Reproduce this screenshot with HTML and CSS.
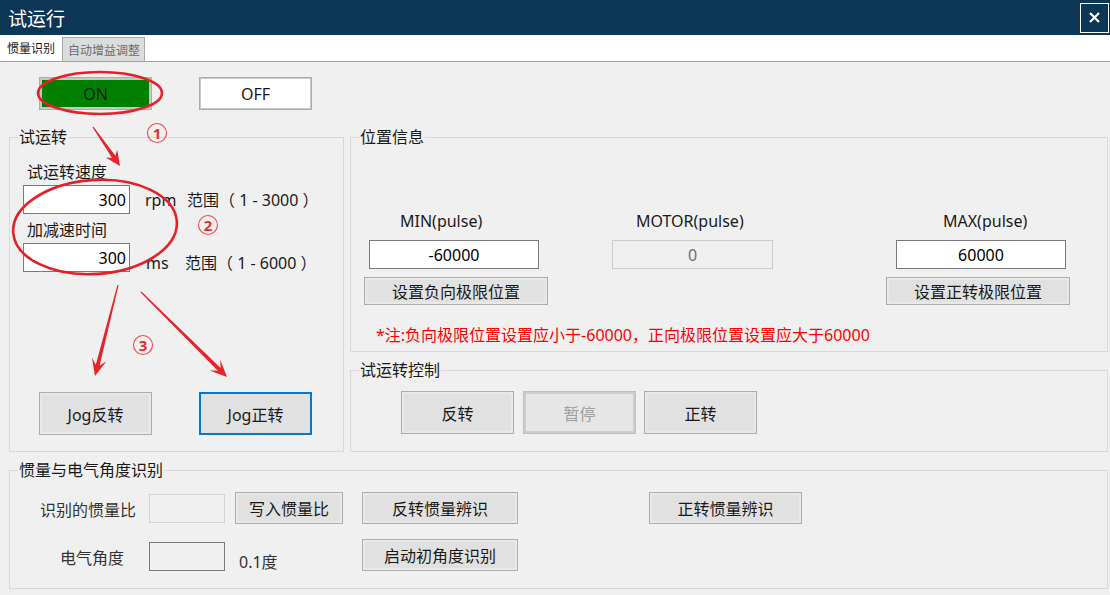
FILE: index.html
```html
<!DOCTYPE html>
<html lang="zh-CN">
<head>
    <meta charset="UTF-8">
    <meta name="viewport" content="width=device-width, initial-scale=1.0">
    <title>试运行</title>
    <link rel="stylesheet" href="styles.css">
</head>
<body>
    <div class="window">
        <div class="titlebar">
            <span class="title">试运行</span>
            <button class="close-btn">
                <svg width="11" height="11" viewBox="0 0 11 11">
                    <path d="M1 1 L10 10 M10 1 L1 10" stroke="#fff" stroke-width="2.2" fill="none"/>
                </svg>
            </button>
        </div>

        <div class="tabs">
            <div class="tab active">惯量识别</div>
            <div class="tab">自动增益调整</div>
        </div>

        <div class="content">
            <div class="power-row">
                <button class="btn power-btn on">ON</button>
                <button class="btn power-btn off">OFF</button>
            </div>

            <div class="middle">
                <!-- 试运转 -->
                <div class="group trial-group">
                    <div class="group-title">试运转</div>
                    <div class="field-label speed-label">试运转速度</div>
                    <div class="field-row speed-row">
                        <input class="num-input" value="300" readonly>
                        <span class="unit rpm">rpm</span>
                        <span class="range">范围（ 1 - 3000 ）</span>
                    </div>
                    <div class="field-label accel-label">加减速时间</div>
                    <div class="field-row accel-row">
                        <input class="num-input" value="300" readonly>
                        <span class="unit ms">ms</span>
                        <span class="range">范围（ 1 - 6000 ）</span>
                    </div>
                    <div class="jog-row">
                        <button class="btn jog-btn">Jog反转</button>
                        <button class="btn jog-btn focused">Jog正转</button>
                    </div>
                </div>

                <div class="right-col">
                    <!-- 位置信息 -->
                    <div class="group pos-group">
                        <div class="group-title">位置信息</div>
                        <div class="limit-row">
                            <div class="limit-col min-col">
                                <div class="limit-label">MIN(pulse)</div>
                                <input class="limit-input" value="-60000" readonly>
                                <button class="btn limit-btn">设置负向极限位置</button>
                            </div>
                            <div class="limit-col motor-col">
                                <div class="limit-label">MOTOR(pulse)</div>
                                <input class="limit-input disabled" value="0" disabled>
                            </div>
                            <div class="limit-col max-col">
                                <div class="limit-label">MAX(pulse)</div>
                                <input class="limit-input" value="60000" readonly>
                                <button class="btn limit-btn">设置正转极限位置</button>
                            </div>
                        </div>
                        <p class="note">*注:负向极限位置设置应小于-60000，正向极限位置设置应大于60000</p>
                    </div>

                    <!-- 试运转控制 -->
                    <div class="group ctrl-group">
                        <div class="group-title">试运转控制</div>
                        <div class="ctrl-row">
                            <button class="btn ctrl-btn">反转</button>
                            <button class="btn ctrl-btn pause" disabled>暂停</button>
                            <button class="btn ctrl-btn fwd">正转</button>
                        </div>
                    </div>
                </div>
            </div>

            <!-- 惯量与电气角度识别 -->
            <div class="group inertia-group">
                <div class="group-title">惯量与电气角度识别</div>
                <div class="inertia-row first">
                    <div class="cell-label ratio-label">识别的惯量比</div>
                    <input class="small-input light" readonly>
                    <button class="btn write-btn">写入惯量比</button>
                    <button class="btn ident-btn rev">反转惯量辨识</button>
                    <button class="btn ident-btn fwd">正转惯量辨识</button>
                </div>
                <div class="inertia-row second">
                    <div class="cell-label angle-label">电气角度</div>
                    <input class="small-input" readonly>
                    <span class="deg">0.1度</span>
                    <button class="btn ident-btn">启动初角度识别</button>
                </div>
            </div>
        </div>

        <!-- 标注 -->
        <svg class="marks" width="1110" height="595" viewBox="0 0 1110 595">
            <ellipse cx="100" cy="93" rx="62" ry="21" fill="none" stroke="#e5202a" stroke-width="2.6"/>
            <ellipse cx="95" cy="227" rx="82" ry="47" fill="none" stroke="#e5202a" stroke-width="2.6" transform="rotate(-4 95 227)"/>
            <polygon class="arrow" points="92.5,127.3 112.1,158 105.7,157.6 120,166 117.2,149.7 115.4,155.8 93.5,126.7"/>
            <polygon class="arrow" points="117.4,284.9 95.8,364.8 91.9,357.7 95,376 106.5,361.3 99.6,365.8 118.6,285.1"/>
            <polygon class="arrow" points="140.6,292.4 217.8,370.7 209.6,370.4 227,377 220.2,359.7 220.6,367.9 141.4,291.6"/>
            <g class="num">
                <circle cx="157" cy="133" r="9.5"/>
                <text x="157" y="138.5">1</text>
                <circle cx="208" cy="225" r="9.5"/>
                <text x="208" y="230.5">2</text>
                <circle cx="143" cy="345" r="9.5"/>
                <text x="143" y="350.5">3</text>
            </g>
        </svg>
    </div>
</body>
</html>
```

FILE: styles.css
```css
* {
    margin: 0;
    padding: 0;
    box-sizing: border-box;
}

body {
    width: 1110px;
    height: 595px;
    overflow: hidden;
    font-family: "Noto Sans", "Noto Sans CJK SC", sans-serif;
    font-size: 16px;
    color: #1a1a1a;
    background: #f0f0f0;
}

.window {
    position: relative;
    width: 1110px;
    height: 595px;
}

/* title bar */
.titlebar {
    height: 35px;
    background: #0b3656;
    display: flex;
    align-items: center;
    justify-content: space-between;
    padding: 0 1px 0 8px;
}

.title {
    color: #fff;
    font-size: 19px;
    line-height: 24px;
    font-family: "Noto Sans CJK SC", sans-serif;
}

.close-btn {
    width: 29px;
    height: 30px;
    border: 1px solid #fff;
    background: transparent;
    display: flex;
    align-items: center;
    justify-content: center;
}

/* tabs */
.tabs {
    height: 27px;
    background: #fff;
    border-bottom: 1px solid #a0a0a0;
    display: flex;
    align-items: flex-end;
}

.tab {
    width: 83px;
    height: 24px;
    padding-left: 5px;
    font-size: 12px;
    line-height: 23px;
    color: #6d6d6d;
    background: #dcdcdc;
    border: 1px solid #a8a8a8;
    border-bottom: none;
    font-family: "Noto Sans CJK SC", sans-serif;
}

.tab.active {
    width: 62px;
    height: 26px;
    padding-left: 7px;
    line-height: 26px;
    background: #fff;
    border: none;
    color: #1a1a1a;
}

/* content */
.content {
    height: 533px;
    padding: 15px 2px 0 9px;
}

.btn {
    font: inherit;
    color: #1a1a1a;
    background: #e1e1e1;
    border: 1px solid #adadad;
    box-shadow: inset 0 0 0 2px #e8e8e8;
    cursor: pointer;
}

.power-row {
    display: flex;
    gap: 47px;
    padding-left: 30px;
}

.power-btn {
    width: 113px;
    height: 33px;
}

.power-btn.on {
    background: #008000;
    box-shadow: inset 0 0 0 2px #c6c6c6;
}

.power-btn.off {
    background: #fff;
    box-shadow: inset 0 0 0 1px #c8c8c8;
}

.middle {
    display: flex;
    gap: 6px;
    margin-top: 27px;
}

.group {
    border: 1px solid #d9d9d9;
}

.group-title {
    width: fit-content;
    margin: -11px 0 0 8px;
    padding: 0 1px;
    line-height: 20px;
    background: #f0f0f0;
}

/* 试运转 */
.trial-group {
    width: 335px;
    height: 315px;
}

.field-label {
    margin-left: 17px;
    line-height: 20px;
}

.speed-label {
    margin-top: 15px;
}

.accel-label {
    margin-top: 6px;
}

.field-row {
    display: flex;
    margin: 3px 0 0 13px;
    line-height: 20px;
}

.num-input {
    width: 107px;
    height: 29px;
    font: inherit;
    color: #000;
    text-align: right;
    padding-right: 3px;
    border: 1px solid #7a7a7a;
    background: #fff;
    outline: none;
}

.unit {
    display: block;
}

.unit.rpm {
    width: 42px;
    margin-left: 15px;
}

.unit.ms {
    width: 39px;
    margin-left: 16px;
}

.speed-row .unit,
.speed-row .range {
    padding-top: 5px;
}

.accel-row .unit,
.accel-row .range {
    padding-top: 10px;
}

.jog-row {
    display: flex;
    gap: 47px;
    margin-top: 119px;
    padding-left: 29px;
}

.jog-btn {
    width: 113px;
    height: 43px;
}

.jog-btn.focused {
    border: 2px solid #0078d7;
    box-shadow: none;
}

/* right column */
.right-col {
    width: 758px;
    display: flex;
    flex-direction: column;
}

.pos-group {
    height: 215px;
}

.limit-row {
    display: flex;
    margin-top: 64px;
    padding-left: 13px;
}

.limit-col {
    display: flex;
    flex-direction: column;
    align-items: flex-start;
}

.limit-label {
    line-height: 20px;
}

.limit-input {
    width: 170px;
    height: 29px;
    margin-top: 9px;
    font: inherit;
    color: #000;
    text-align: center;
    border: 1px solid #7a7a7a;
    background: #fff;
    outline: none;
}

.limit-input.disabled {
    width: 161px;
    color: #6d6d6d;
    background: #f0f0f0;
    border-color: #cccccc;
}

.limit-btn {
    width: 184px;
    height: 28px;
    margin-top: 8px;
}

.min-col {
    width: 184px;
}

.min-col .limit-label {
    margin-left: 36px;
}

.min-col .limit-input {
    margin-left: 5px;
}

.motor-col {
    width: 162px;
    margin-left: 64px;
}

.motor-col .limit-label {
    margin-left: 24px;
}

.max-col {
    width: 184px;
    margin-left: 112px;
}

.max-col .limit-label {
    margin-left: 57px;
}

.max-col .limit-input {
    margin-left: 10px;
}

.note {
    margin: 20px 0 0 25px;
    line-height: 20px;
    color: #ff0000;
}

/* 试运转控制 */
.ctrl-group {
    height: 82px;
    margin-top: 18px;
}

.ctrl-row {
    display: flex;
    margin-top: 11px;
    padding-left: 50px;
}

.ctrl-btn {
    width: 113px;
    height: 43px;
}

.ctrl-btn.pause {
    margin-left: 9px;
    color: #a0a0a0;
    background: #e6e6e6;
    border-color: #bfbfbf;
    box-shadow: inset 0 0 0 2px #cdcdcd;
    cursor: default;
}

.ctrl-btn.fwd {
    margin-left: 8px;
}

/* 惯量与电气角度识别 */
.inertia-group {
    width: 1099px;
    height: 119px;
    margin-top: 18px;
}

.inertia-row {
    display: flex;
}

.inertia-row.first {
    height: 34px;
    margin-top: 11px;
    align-items: center;
}

.inertia-row.second {
    height: 33px;
    margin-top: 14px;
    align-items: flex-start;
}

.cell-label {
    width: 139px;
    line-height: 20px;
    color: #333;
}

.ratio-label {
    padding-left: 30px;
    margin-top: 4px;
}

.angle-label {
    padding-left: 50px;
    margin-top: 9px;
}

.small-input {
    width: 76px;
    height: 29px;
    font: inherit;
    border: 1px solid #7a7a7a;
    background: #f0f0f0;
    outline: none;
}

.small-input.light {
    border-color: #d4d4d4;
}

.second .small-input {
    margin-top: 3px;
}

.write-btn {
    width: 108px;
    height: 32px;
    margin-left: 10px;
}

.ident-btn {
    width: 156px;
    height: 32px;
}

.ident-btn.rev {
    margin-left: 19px;
}

.ident-btn.fwd {
    width: 153px;
    margin-left: 131px;
}

.deg {
    width: 123px;
    margin: 13px 0 0 14px;
    line-height: 20px;
    color: #333;
}

/* annotation overlay */
.marks {
    position: absolute;
    top: 0;
    left: 0;
    pointer-events: none;
}

.arrow {
    fill: #e6222a;
}

.num circle {
    fill: none;
    stroke: #f04848;
    stroke-width: 1.1;
}

.num text {
    fill: #e62e2e;
    font-family: "Noto Sans", sans-serif;
    font-size: 15px;
    font-weight: bold;
    text-anchor: middle;
}
```
